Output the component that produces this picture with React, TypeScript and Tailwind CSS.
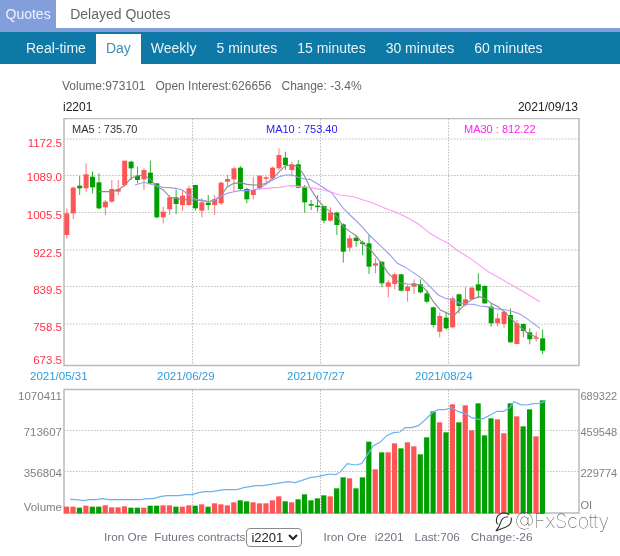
import React from "react";

// chart numbers are kept in thirds of a pixel, read off the picture
type Candle = [string, number, number, number, number];

const candles: Candle[] = [
  ["r", 280, 345, 265, 355], ["r", 203, 280, 200, 297], ["g", 197, 205, 168, 225], ["r", 163, 205, 130, 215],
  ["g", 170, 202, 155, 220], ["g", 187, 265, 160, 268], ["r", 245, 262, 240, 285], ["r", 207, 245, 180, 248],
  ["r", 207, 215, 180, 225], ["r", 122, 195, 122, 200], ["g", 125, 145, 122, 180], ["g", 167, 180, 140, 190],
  ["r", 150, 178, 145, 210], ["g", 158, 190, 122, 192], ["g", 190, 292, 190, 295], ["r", 275, 292, 260, 310],
  ["r", 232, 268, 225, 285], ["g", 232, 252, 208, 282], ["r", 227, 255, 210, 272], ["r", 205, 255, 197, 258],
  ["g", 195, 265, 195, 272], ["r", 247, 272, 235, 292], ["g", 248, 255, 225, 270], ["r", 237, 255, 225, 285],
  ["r", 188, 250, 185, 255], ["r", 177, 185, 165, 197], ["r", 145, 178, 140, 215], ["g", 143, 207, 138, 210],
  ["g", 207, 238, 203, 250], ["r", 210, 225, 170, 238], ["r", 167, 205, 165, 210], ["r", 172, 175, 168, 195],
  ["r", 143, 175, 140, 180], ["r", 105, 145, 85, 150], ["g", 113, 135, 95, 150], ["r", 133, 150, 125, 170],
  ["g", 133, 203, 120, 205], ["g", 200, 247, 195, 278], ["g", 252, 257, 240, 270], ["g", 257, 260, 225, 275],
  ["g", 258, 302, 258, 310], ["r", 278, 302, 262, 305], ["g", 278, 315, 275, 345], ["g", 313, 395, 310, 428],
  ["r", 355, 383, 345, 395], ["g", 353, 363, 345, 380], ["g", 367, 372, 362, 405], ["g", 370, 440, 345, 462],
  ["r", 430, 437, 415, 460], ["g", 425, 490, 425, 502], ["r", 487, 500, 480, 532], ["r", 463, 492, 458, 508],
  ["g", 463, 512, 462, 515], ["r", 500, 513, 495, 545], ["r", 490, 500, 478, 522], ["g", 493, 517, 478, 520],
  ["g", 520, 545, 510, 550], ["g", 562, 615, 560, 622], ["r", 588, 635, 578, 652], ["g", 593, 625, 575, 628],
  ["r", 535, 622, 530, 625], ["g", 523, 558, 520, 580], ["r", 538, 555, 500, 560], ["r", 503, 538, 500, 540],
  ["g", 493, 512, 460, 535], ["g", 498, 550, 495, 552], ["g", 560, 610, 550, 620], ["r", 595, 610, 580, 620],
  ["r", 575, 612, 575, 625], ["g", 585, 667, 565, 668], ["r", 610, 672, 600, 673], ["g", 612, 633, 610, 652],
  ["g", 637, 658, 625, 673], ["r", 652, 656, 635, 665], ["g", 655, 692, 628, 703],
];

const volumeTops = [
  365, 365, 368, 362, 365, 365, 361, 367, 367, 364, 368, 368, 368, 362, 362, 361, 361, 365, 365, 361, 362, 358, 365,
  355, 358, 361, 352, 346, 349, 352, 355, 355, 346, 334, 349, 352, 343, 328, 346, 340, 331, 334, 310, 277, 280, 310,
  277, 170, 253, 202, 202, 175, 190, 172, 184, 208, 157, 79, 112, 142, 58, 112, 61, 136, 55, 151, 100, 103, 145, 55,
  94, 124, 73, 154, 46,
];

const ma5 = [
  297, 215, 336, 215, 354, 210, 375, 195, 393, 175, 412, 167, 432, 165, 450, 178, 471, 200, 490, 210, 510, 232, 528,
  235, 547, 238, 567, 240, 586, 240, 606, 242, 625, 245, 645, 240, 664, 225, 682, 200, 702, 190, 720, 188, 741, 193,
  760, 195, 780, 195, 798, 190, 818, 175, 838, 155, 856, 137, 877, 135, 895, 140, 915, 170, 930, 203, 950, 235, 973,
  262, 991, 275, 1011, 290, 1030, 320, 1050, 335, 1069, 347, 1088, 370, 1108, 385, 1145, 430, 1165, 460, 1186, 480,
  1204, 490, 1224, 492, 1243, 493, 1263, 495, 1282, 515, 1300, 545, 1321, 570, 1339, 578, 1360, 588, 1378, 570, 1398,
  550, 1417, 538, 1437, 530, 1455, 535, 1474, 550, 1494, 560, 1513, 575, 1533, 595, 1552, 615, 1572, 630, 1591, 645,
  1610, 650,
];

const ma10 = [
  405, 195, 432, 187, 450, 192, 471, 198, 490, 202, 510, 203, 528, 205, 547, 210, 567, 225, 586, 238, 606, 240, 625,
  245, 645, 240, 664, 228, 682, 220, 702, 215, 720, 212, 741, 212, 760, 210, 780, 205, 798, 192, 818, 180, 838, 170,
  856, 165, 877, 165, 895, 172, 915, 177, 930, 178, 950, 190, 973, 205, 995, 218, 1011, 240, 1030, 265, 1050, 285,
  1069, 303, 1088, 322, 1108, 345, 1128, 365, 1150, 385, 1170, 405, 1192, 430, 1213, 440, 1240, 458, 1265, 475, 1290,
  500, 1315, 525, 1335, 535, 1360, 540, 1380, 550, 1400, 552, 1420, 553, 1440, 558, 1460, 560, 1480, 565, 1500, 568,
  1520, 570, 1540, 575, 1560, 582, 1580, 595, 1600, 610, 1620, 625,
];

const ma30 = [
  780, 207, 800, 205, 820, 203, 840, 202, 860, 198, 880, 197, 900, 200, 930, 203, 960, 208, 990, 215, 1020, 225, 1060,
  230, 1090, 240, 1120, 250, 1155, 265, 1185, 275, 1220, 292, 1255, 312, 1290, 340, 1320, 358, 1345, 370, 1370, 390,
  1395, 405, 1420, 422, 1465, 455, 1500, 475, 1535, 495, 1570, 515, 1620, 545,
];

const oiLine = [
  210, 343, 230, 344, 250, 347, 268, 344, 288, 344, 307, 341, 327, 344, 346, 344, 365, 344, 384, 344, 404, 344, 423,
  344, 442, 341, 461, 341, 480, 335, 500, 332, 519, 332, 538, 332, 557, 329, 577, 329, 596, 323, 615, 320, 635, 320,
  654, 317, 673, 314, 692, 314, 711, 314, 731, 308, 750, 305, 769, 302, 789, 302, 808, 299, 827, 296, 846, 293, 865,
  290, 885, 293, 904, 287, 930, 278, 952, 275, 970, 271, 988, 267, 1008, 269, 1022, 260, 1042, 236, 1066, 240, 1085,
  236, 1105, 205, 1120, 182, 1140, 172, 1160, 152, 1180, 143, 1200, 141, 1215, 128, 1235, 128, 1255, 122, 1275, 105,
  1295, 85, 1315, 74, 1335, 74, 1355, 68, 1375, 80, 1395, 85, 1415, 98, 1435, 103, 1452, 100, 1471, 90, 1491, 79,
  1511, 79, 1530, 68, 1542, 50, 1562, 59, 1580, 60, 1600, 56, 1620, 55, 1638, 47,
];

const RED = "#ff5555";
const GREEN = "#00a000";

const toPoints = (flat: number[], top: number) => {
  const out: string[] = [];
  for (let i = 0; i < flat.length; i += 2) {
    out.push(`${flat[i] / 3},${top + flat[i + 1] / 3}`);
  }
  return out.join(" ");
};

const centerX = (i: number) => 66.8 + 6.43 * i;

function GridLines({ left, right, top, bottom, rows }: { left: number; right: number; top: number; bottom: number; rows: number[] }) {
  return (
    <g stroke="#bdbdbd" strokeWidth="1" strokeDasharray="1.5 1.5">
      {rows.map((y) => (
        <line key={y} x1={left} x2={right} y1={y} y2={y} />
      ))}
      {[192.5, 320.5, 448.5].map((x) => (
        <line key={x} x1={x} x2={x} y1={top} y2={bottom} />
      ))}
    </g>
  );
}

function PriceChart() {
  const prices: [string, number][] = [
    ["1172.5", 143], ["1089.0", 176.5], ["1005.5", 215], ["922.5", 252.5], ["839.5", 290], ["758.5", 327], ["673.5", 360],
  ];
  const dates: [string, number][] = [
    ["2021/05/31", 30], ["2021/06/29", 157], ["2021/07/27", 287], ["2021/08/24", 415],
  ];
  return (
    <svg width="620" height="267" viewBox="0 118 620 267" className="block" fontFamily="'Liberation Sans', Arial, sans-serif">
      <rect x="64" y="118.5" width="515" height="247" fill="#fff" stroke="#bbbbbb" strokeWidth="1.5" />
      <GridLines left={64} right={578} top={119} bottom={365} rows={[139, 175.5, 212.5, 250, 286.5, 324]} />
      {candles.map(([c, t, b, wt, wb], i) => {
        const x = centerX(i);
        const fill = c === "g" ? GREEN : RED;
        return (
          <g key={i}>
            <line x1={x} x2={x} y1={120 + wt / 3} y2={120 + wb / 3} stroke={fill} strokeOpacity="0.8" strokeWidth="1" />
            <rect x={x - 2.5} y={120 + t / 3} width="5" height={Math.max((b - t) / 3, 1.5)} fill={fill} />
          </g>
        );
      })}
      <polyline points={toPoints(ma5, 120)} fill="none" stroke="#8c8c8c" strokeWidth="1.1" />
      <polyline points={toPoints(ma10, 120)} fill="none" stroke="#9a9af5" strokeWidth="1.1" />
      <polyline points={toPoints(ma30, 120)} fill="none" stroke="#ff9cf5" strokeWidth="1.1" />
      <text x="72" y="133" fontSize="11" fill="#333">MA5 : 735.70</text>
      <text x="266" y="133" fontSize="11" fill="#2222ff">MA10 : 753.40</text>
      <text x="464" y="133" fontSize="11" fill="#ff22ee">MA30 : 812.22</text>
      {prices.map(([label, y]) => (
        <text key={label} x="62" y={y + 4} fontSize="11.5" fill="#ff3344" textAnchor="end">{label}</text>
      ))}
      {dates.map(([label, x]) => (
        <text key={label} x={x} y="380" fontSize="11.5" fill="#2f9be0">{label}</text>
      ))}
    </svg>
  );
}

function VolumeChart() {
  const left: [string, number][] = [["1070411", 396], ["713607", 431.5], ["356804", 472.5], ["Volume", 506.5]];
  const right: [string, number][] = [["689322", 396], ["459548", 431.5], ["229774", 472.5], ["OI", 505]];
  return (
    <svg width="620" height="135" viewBox="0 385 620 135" className="block" fontFamily="'Liberation Sans', Arial, sans-serif">
      <rect x="64" y="389.5" width="515" height="123.5" fill="#fff" stroke="#bbbbbb" strokeWidth="1.5" />
      <GridLines left={64} right={578} top={390} bottom={513} rows={[430.5, 471.5]} />
      {volumeTops.map((z, i) => (
        <rect
          key={i}
          x={64 + 6.43 * i}
          y={385 + z / 3}
          width="5.2"
          height={513.5 - (385 + z / 3)}
          fill={candles[i][0] === "g" ? GREEN : RED}
        />
      ))}
      <polyline points={toPoints(oiLine, 385)} fill="none" stroke="#6db2ee" strokeWidth="1.2" />
      {left.map(([label, y]) => (
        <text key={label} x="62" y={y + 4} fontSize="11.5" fill="#808080" textAnchor="end">{label}</text>
      ))}
      {right.map(([label, y]) => (
        <text key={label} x="580.5" y={y + 4} fontSize="11" fill="#808080">{label}</text>
      ))}
    </svg>
  );
}

const periods = ["Real-time", "Day", "Weekly", "5 minutes", "15 minutes", "30 minutes", "60 minutes"];

export default function App() {
  return (
    <div className="relative w-[620px] h-[556px] overflow-hidden bg-white font-['Liberation_Sans',Arial,sans-serif] blur-[0.45px]">
      <div className="flex h-8 border-b-4 border-[#829fdc] text-sm">
        <div className="bg-[#829fdc] text-[#eef3fb] px-[5.5px] leading-7">Quotes</div>
        <div className="text-[#666] pl-3.5 leading-7">Delayed Quotes</div>
      </div>

      <div className="flex items-end h-8 pl-4 bg-[#0e79a7] text-sm text-[#e8f3f8]">
        {periods.map((p) =>
          p === "Day" ? (
            <div key={p} className="h-[30px] px-2.5 leading-7 bg-white text-[#3f8fb3]">{p}</div>
          ) : (
            <div key={p} className="h-[30px] px-2.5 leading-7">{p}</div>
          ),
        )}
      </div>

      <div className="flex gap-2.5 mt-[15px] pl-[62px] text-xs leading-[14px] text-[#666]">
        <span>Volume:973101</span>
        <span>Open Interest:626656</span>
        <span>Change: -3.4%</span>
      </div>

      <div className="flex justify-between mt-[7px] pl-[63px] pr-[42px] text-xs leading-[14px] text-[#222]">
        <span>i2201</span>
        <span>2021/09/13</span>
      </div>

      <div className="mt-1">
        <PriceChart />
        <VolumeChart />
      </div>

      <div className="flex items-center h-9 pl-[104px] pb-px text-[11.8px] text-[#6f7480]">
        <span>Iron Ore</span>
        <span className="ml-[7px]">Futures contracts</span>
        <select
          defaultValue="i2201"
          className="ml-px w-14 h-[19px] text-[13px] text-[#222] bg-white border border-[#8a8a8a] rounded-sm"
        >
          <option value="i2201">i2201</option>
        </select>
        <span className="ml-[21px]">Iron Ore</span>
        <span className="ml-2">i2201</span>
        <span className="ml-[11px]">Last:706</span>
        <span className="ml-[11px]">Change:-26</span>
      </div>

      <div className="absolute left-[494px] top-[511px] flex items-start gap-[2px]">
        <svg width="19" height="21" viewBox="0 0 20 22" fill="none" stroke="#333" strokeWidth="1.2">
          <path d="M16 4C13 1 7 1 4 5C2 8 2 12 4 14" />
          <path d="M18 7C19 11 17 16 12 17C9 18 6 19 2 21C5 18 6 15 7 12C8 8 11 6 15 6" />
        </svg>
        <span className="font-['Inter',sans-serif] font-thin text-[19.5px] leading-[20px] text-[#444]">@FxScotty</span>
      </div>
    </div>
  );
}
